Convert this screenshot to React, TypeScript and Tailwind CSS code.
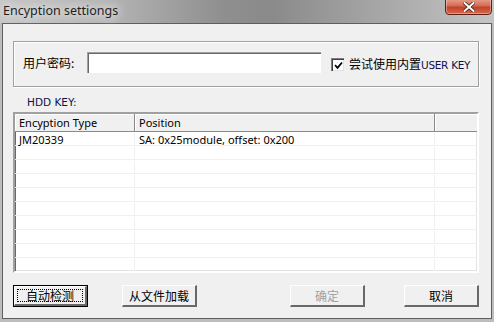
import React from "react";

const cjk = { fontFamily: '"Noto Sans CJK SC", "Noto Sans", sans-serif' };
const ui = { fontFamily: '"Noto Sans", "Liberation Sans", sans-serif' };
const tahoma = { fontFamily: '"DejaVu Sans", "Liberation Sans", sans-serif' };

function Btn({
  children,
  def,
  disabled,
  className,
}: {
  children: React.ReactNode;
  def?: boolean;
  disabled?: boolean;
  className?: string;
}) {
  return (
    <div
      className={
        "h-[22px] w-[75px] shrink-0 bg-[#f0f0f0] " +
        (def ? "border border-black " : "") +
        (className ?? "")
      }
    >
      <div
        className={
          "relative flex h-full w-full items-center justify-center whitespace-nowrap border-t border-l border-t-white border-l-white border-r-2 border-b-2 border-r-[#696969] border-b-[#696969] text-[12px] leading-none " +
          (disabled ? "text-[#a0a0a0]" : "text-black")
        }
        style={cjk}
      >
        {def && (
          <div className="pointer-events-none absolute inset-[2px] border border-dotted border-black" />
        )}
        {children}
      </div>
    </div>
  );
}

export default function App() {
  const rows = Array.from({ length: 10 });
  return (
    <div className="flex h-[322px] w-[494px] flex-col overflow-hidden bg-[#bdbdbd]">
      {/* title bar */}
      <div className="relative flex h-[23px] shrink-0 items-center bg-[linear-gradient(to_right,#c6c6c6_0%,#b4b4b4_22%,#8f8f8f_45%,#8a8a8a_55%,#a8a8a8_78%,#c4c4c4_100%)] pl-[3px]">
        <span
          className="whitespace-nowrap text-[12.5px] leading-none text-[#1e1e1e] [text-shadow:0_0_8px_#ffffff,0_0_14px_#ffffff]"
          style={ui}
        >
          Encyption settiongs
        </span>
        <div className="absolute right-[2px] top-[-2px] flex h-[17px] w-[47px] items-center justify-center rounded-b-[4px] border border-[#5b2217] bg-[linear-gradient(to_bottom,#e7a08f_0%,#d66a52_45%,#c0432b_55%,#d8684d_100%)] shadow-[inset_0_0_0_1px_rgba(255,255,255,0.35)]">
          <svg width="12" height="10" viewBox="0 0 12 10">
            <path
              d="M1.5 1 L10.5 9 M10.5 1 L1.5 9"
              stroke="#3a1a14"
              strokeWidth="3.4"
              strokeLinecap="square"
            />
            <path
              d="M1.5 1 L10.5 9 M10.5 1 L1.5 9"
              stroke="#ffffff"
              strokeWidth="2"
              strokeLinecap="square"
            />
          </svg>
        </div>
      </div>

      {/* client area */}
      <div className="mx-[2px] mb-[3px] flex flex-1 flex-col border border-[#5e5e5e] bg-[#f0f0f0] pl-[10px] pr-[9px] pt-[17px]">
        {/* group box */}
        <div className="flex h-[46px] w-[466px] items-start border border-[#a0a0a0] pt-[10px] shadow-[inset_1px_1px_0_#ffffff,1px_1px_0_#ffffff]">
          <span className="ml-[9px] mt-[4px] w-[64px] shrink-0 whitespace-nowrap text-[12px] leading-[14px] text-black" style={cjk}>
            用户密码:
          </span>
          <div className="h-[21px] w-[234px] shrink-0 border-t border-l border-[#a0a0a0] border-r-white border-b-white bg-white shadow-[inset_1px_1px_0_#696969]" />
          <div className="ml-[10px] mt-[6px] flex h-[13px] w-[13px] shrink-0 items-center justify-center border-t border-l border-[#808080] border-r-white border-b-white bg-white shadow-[inset_1px_1px_0_#404040,inset_-1px_-1px_0_#e3e3e3]">
            <svg width="9" height="9" viewBox="0 0 9 9">
              <path d="M1 4 L3.5 6.8 L8 1.5" stroke="#000" strokeWidth="1.8" fill="none" />
            </svg>
          </div>
          <span className="ml-[5px] mt-[4px] flex shrink-0 items-baseline whitespace-nowrap text-[12px] leading-[15px] text-black">
            <span style={cjk}>尝试使用内置</span>
            <span className="text-[10.5px] tracking-[-0.3px] text-[#10104a]" style={tahoma}>
              USER KEY
            </span>
          </span>
        </div>

        {/* HDD KEY label */}
        <div className="ml-[14px] mt-[8px] h-[14px] whitespace-nowrap text-[10.5px] leading-[14px] text-[#10104a]" style={tahoma}>
          HDD KEY:
        </div>

        {/* list view */}
        <div className="mt-[3px] h-[161px] w-[466px] overflow-hidden border-2 border-t-[#a0a0a0] border-l-[#a0a0a0] border-r-white border-b-white bg-white shadow-[inset_1px_1px_0_#696969,inset_-1px_-1px_0_#e3e3e3]">
          <div className="flex h-[18px] text-[11px] leading-none text-black" style={ui}>
            <div className="flex w-[120px] items-center whitespace-nowrap border-b border-r border-[#8a8a8a] bg-[#f0f0f0] pl-[4px] shadow-[inset_1px_1px_0_#ffffff]">
              Encyption Type
            </div>
            <div className="flex w-[300px] items-center border-b border-r border-[#8a8a8a] bg-[#f0f0f0] pl-[4px] shadow-[inset_1px_1px_0_#ffffff]">
              Position
            </div>
            <div className="flex-1 border-b border-[#8a8a8a] bg-[#f0f0f0] shadow-[inset_1px_1px_0_#ffffff]" />
          </div>
          {rows.map((_, i) => (
            <div key={i} className="flex h-[14px] border-b border-[#f0f0f0] pt-[1px] text-[11px] leading-[13px] text-black" style={ui}>
              <div className="w-[120px] whitespace-nowrap border-r border-[#f0f0f0] pl-[4px]">{i === 0 ? "JM20339" : ""}</div>
              <div className="w-[300px] whitespace-nowrap border-r border-[#f0f0f0] pl-[4px]">
                {i === 0 ? "SA: 0x25module, offset: 0x200" : ""}
              </div>
              <div className="flex-1" />
            </div>
          ))}
        </div>

        {/* buttons */}
        <div className="mt-[12px] flex">
          <Btn def>自动检测</Btn>
          <Btn className="ml-[34px]">从文件加载</Btn>
          <Btn disabled className="ml-[93px]">确定</Btn>
          <Btn className="ml-[39px]">取消</Btn>
        </div>
      </div>
    </div>
  );
}
